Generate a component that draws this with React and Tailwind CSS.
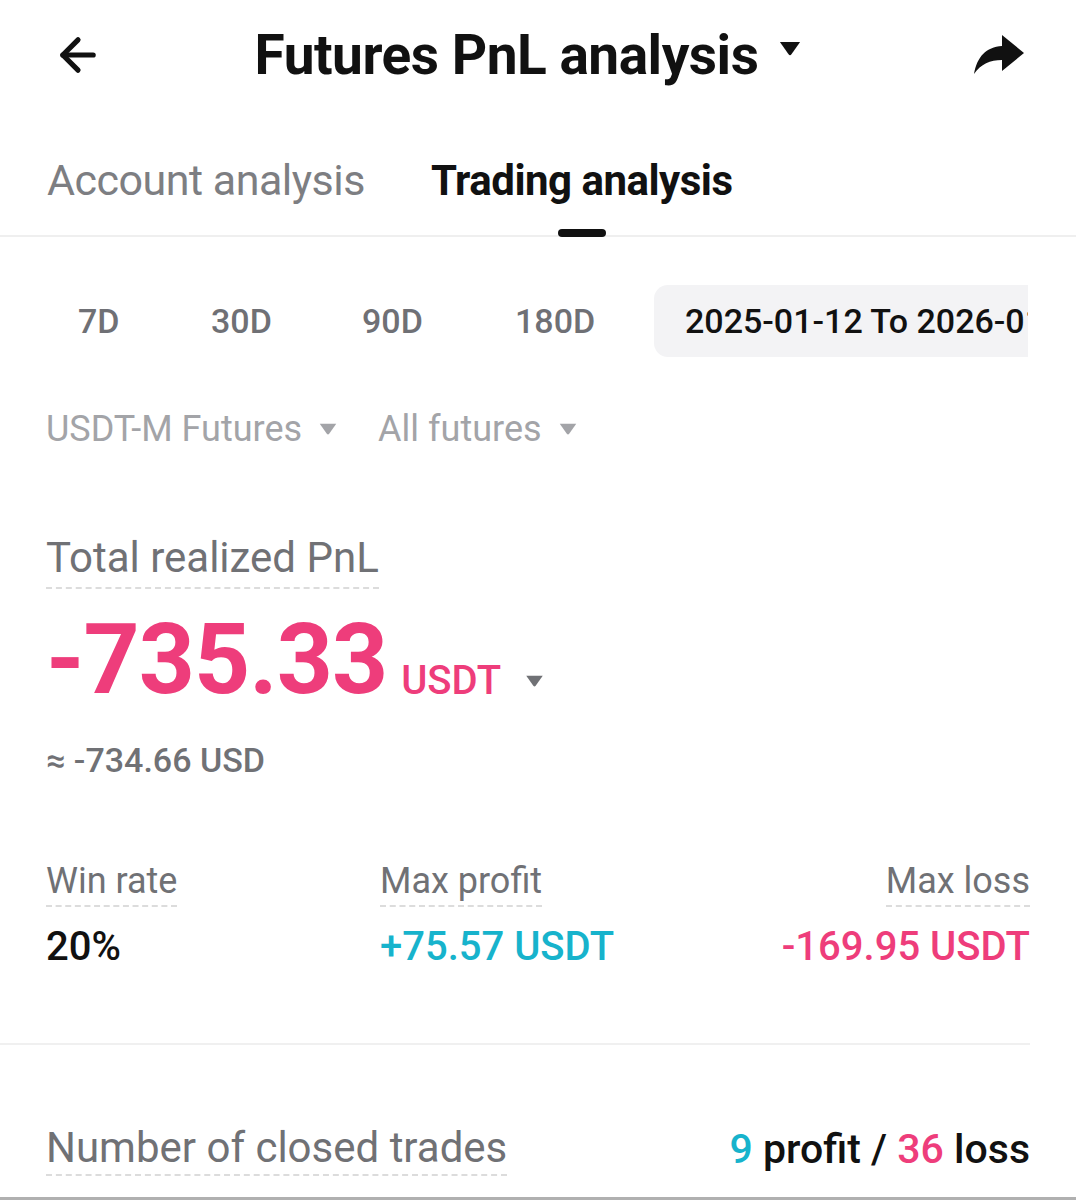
import { ArrowLeft } from "lucide-react";

const font = { fontFamily: "Roboto, 'Noto Sans', sans-serif" };

function Caret({ className = "" }) {
  return (
    <svg viewBox="0 0 12 8" className={className} fill="currentColor">
      <path d="M0.5 0.5h11L6.8 7.2a1 1 0 0 1-1.6 0z" />
    </svg>
  );
}

function ShareIcon() {
  return (
    <svg viewBox="0 0 50 40" className="w-[50px] h-[40px]" fill="#111">
      <path d="M28 0 L50 18 L28 36 L28 25 C16 25 7 29 0 39 C3 22 12 12 28 11 Z" />
    </svg>
  );
}

function Dashed({ children, className = "" }) {
  return (
    <span className={"inline-block border-b-2 border-dashed border-[#dcdcdc] " + className}>
      {children}
    </span>
  );
}

export default function App() {
  return (
    <div className="w-[1076px] h-[1200px] bg-white overflow-hidden border-b-[3px] border-[#b0b0b0]" style={font}>
      {/* header */}
      <div className="h-[110px] flex items-center justify-between pl-[52px] pr-[52px]">
        <ArrowLeft className="w-[52px] h-[52px] text-[#111]" strokeWidth={2.4} />
        <div className="flex items-center gap-[21px] ml-[-22px]">
          <span className="text-[55px] font-bold text-[#111] tracking-[-0.5px]">Futures PnL analysis</span>
          <Caret className="w-[22px] h-[15px] text-[#111] mb-[14px]" />
        </div>
        <ShareIcon />
      </div>

      {/* tabs */}
      <div className="h-[127px] border-b-2 border-[#efefef] flex items-end pl-[47px] gap-[66px]">
        <div className="pb-[23px] text-[43px] text-[#7d7e82] tracking-[-0.5px]">Account analysis</div>
        <div className="relative pb-[23px] text-[42px] font-bold text-[#111] tracking-[-0.5px]">
          Trading analysis
          <div className="absolute left-1/2 -translate-x-1/2 bottom-[-2px] w-[48px] h-[8px] rounded-full bg-[#111]" />
        </div>
      </div>

      {/* periods */}
      <div className="flex items-center mt-[48px] pl-[48px] h-[72px]">
        <div className="w-[163px] pl-[30px] text-[34px] font-medium text-[#6f7075]">7D</div>
        <div className="w-[151px] text-[34px] font-medium text-[#6f7075]">30D</div>
        <div className="w-[153px] text-[34px] font-medium text-[#6f7075]">90D</div>
        <div className="w-[139px] text-[34px] font-medium text-[#6f7075]">180D</div>
        <div className="w-[374px] h-[72px] bg-[#f3f3f5] rounded-l-[14px] overflow-hidden flex items-center pl-[31px] whitespace-nowrap text-[34px] font-medium text-[#111]">
          2025-01-12 To 2026-01-12
        </div>
      </div>

      {/* filters */}
      <div className="flex items-center mt-[52px] pl-[46px] h-[40px] text-[36px] text-[#a3a4a8]">
        <span>USDT-M Futures</span>
        <Caret className="w-[18px] h-[12px] ml-[17px] text-[#a3a4a8]" />
        <span className="ml-[41px]">All futures</span>
        <Caret className="w-[18px] h-[12px] ml-[17px] text-[#a3a4a8]" />
      </div>

      {/* total */}
      <div className="pl-[46px] mt-[84px]">
        <Dashed className="text-[42px] text-[#707175] leading-[50px] pb-[4px]">Total realized PnL</Dashed>
        <div className="flex items-end mt-[22px] h-[98px]">
          <span className="text-[98px] font-bold text-[#ee3d7b] leading-[98px] tracking-[-1px]">-735.33</span>
          <span className="ml-[14px] mb-[4px] text-[40px] font-medium text-[#ee3d7b] leading-[48px]">USDT</span>
          <Caret className="w-[19px] h-[12px] ml-[24px] mb-[22px] text-[#707175]" />
        </div>
        <div className="mt-[26px] text-[34px] font-medium text-[#707175]">≈ -734.66 USD</div>
      </div>

      {/* stats */}
      <div className="flex justify-between pl-[46px] pr-[46px] mt-[73px]">
        <div className="w-[334px]">
          <Dashed className="text-[36px] text-[#707175] leading-[44px] pb-[2px]">Win rate</Dashed>
          <div className="mt-[10px] text-[40px] font-medium text-[#111]">20%</div>
        </div>
        <div className="flex-1">
          <Dashed className="text-[36px] text-[#707175] leading-[44px] pb-[2px]">Max profit</Dashed>
          <div className="mt-[10px] text-[40px] font-medium text-[#17b3cc]">+75.57 USDT</div>
        </div>
        <div className="text-right">
          <Dashed className="text-[36px] text-[#707175] leading-[44px] pb-[2px]">Max loss</Dashed>
          <div className="mt-[10px] text-[40px] font-medium text-[#ee3d7b]">-169.95 USDT</div>
        </div>
      </div>

      <div className="mt-[66px] w-[1030px] h-[2px] bg-[#f0f0f0]" />

      {/* closed trades */}
      <div className="flex justify-between items-center pl-[46px] pr-[46px] mt-[74px]">
        <Dashed className="text-[42px] text-[#707175] leading-[48px] pb-[2px]">Number of closed trades</Dashed>
        <div className="text-[41px] font-medium text-[#111]">
          <span className="text-[#17b3cc]">9</span> profit / <span className="text-[#ee3d7b]">36</span> loss
        </div>
      </div>
    </div>
  );
}
